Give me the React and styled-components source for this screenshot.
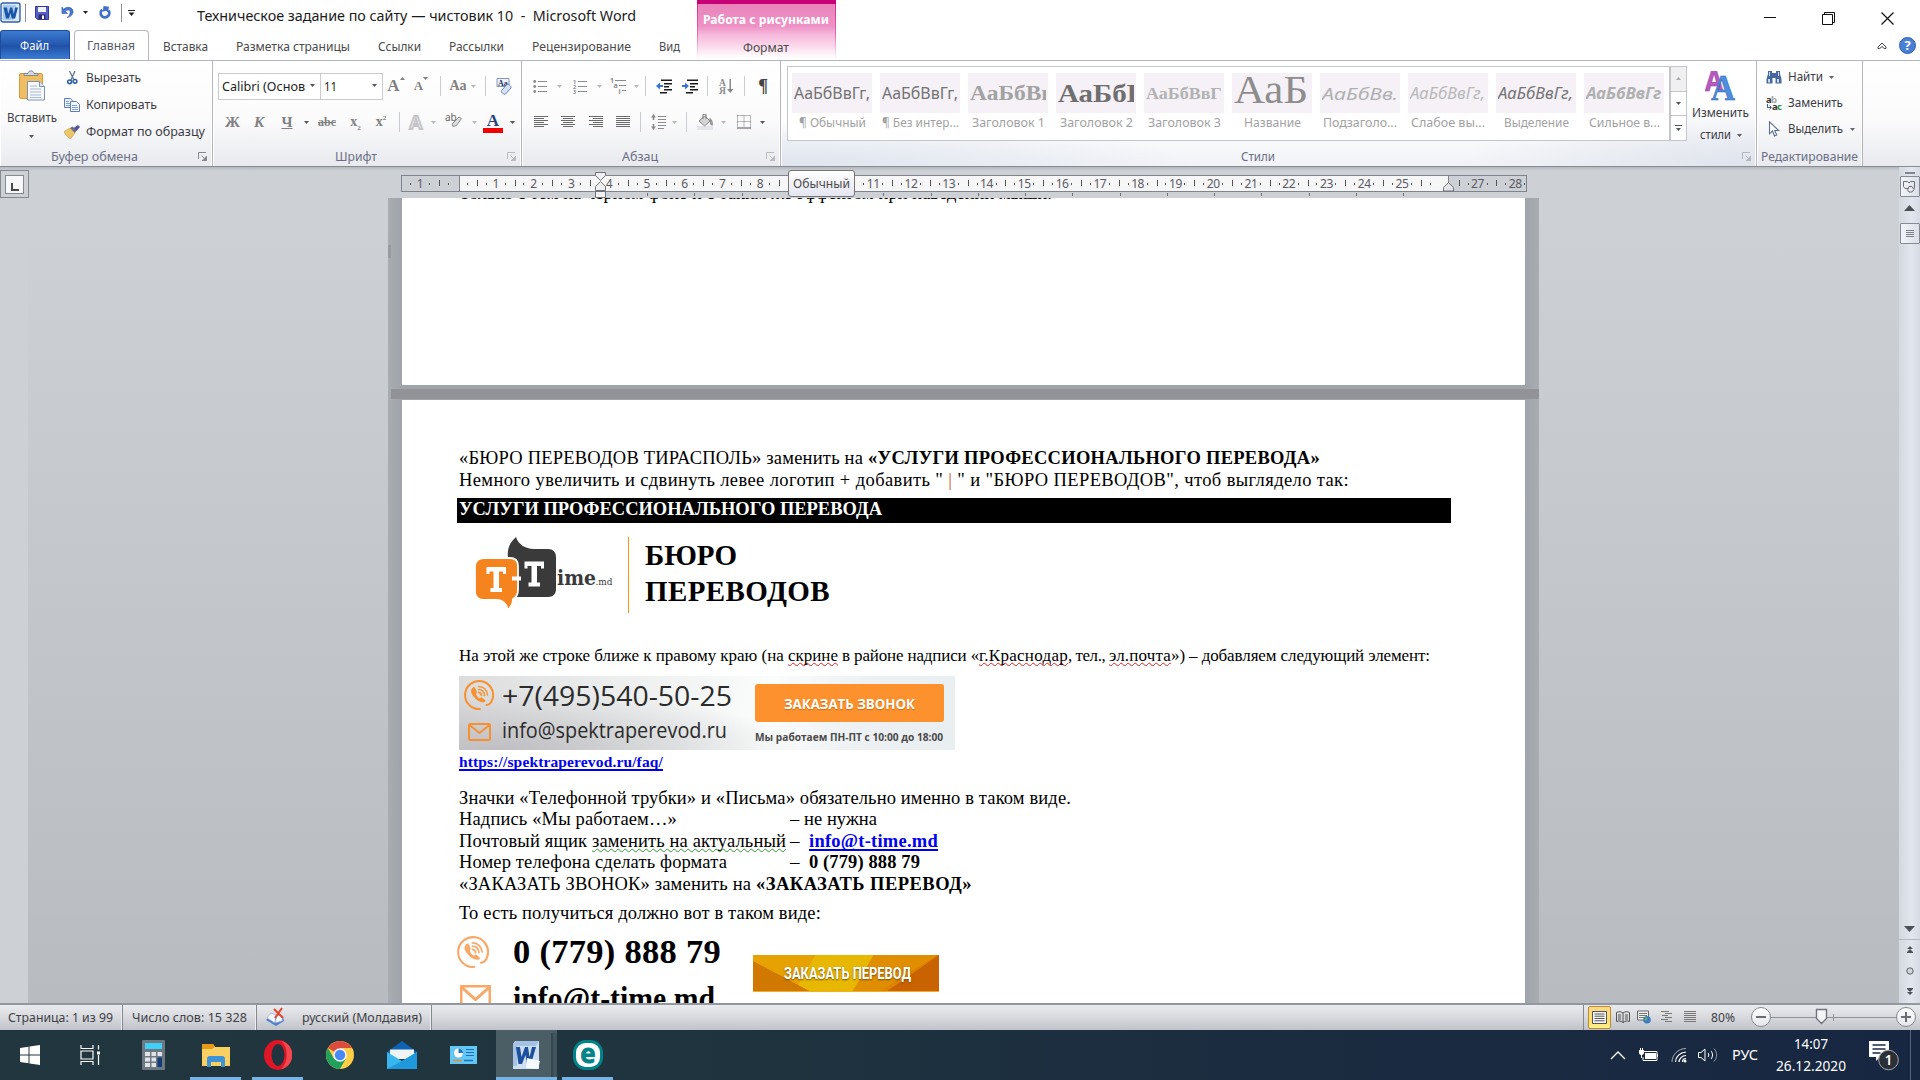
import React, { useLayoutEffect, useRef, useState } from "react";
import styled, { createGlobalStyle, css } from "styled-components";

const UI = `"Noto Sans", "Open Sans", sans-serif`;
const SERIF = `"Liberation Serif", "Times New Roman", serif`;

const Global = createGlobalStyle`
  * { box-sizing: border-box; }
  body { margin: 0; background: #fff; overflow: hidden; }
  svg { display: block; flex: none; }
`;

/* ---------- text run set to a given measure ---------- */
const RunOuter = styled.span`
  display: inline-block;
  width: ${(p) => p.$w}px;
  white-space: pre;
  text-align: left;
`;
const RunInner = styled.span`
  display: inline-block;
  white-space: pre;
  transform-origin: 0 50%;
`;
function Run({ w, spaced, className, children }) {
  const ref = useRef(null);
  const [style, setStyle] = useState(undefined);
  useLayoutEffect(() => {
    const el = ref.current;
    const natural = el.getBoundingClientRect().width;
    if (spaced) setStyle({ letterSpacing: `${(w - natural) / el.textContent.length}px` });
    else setStyle({ transform: `scaleX(${w / natural})` });
  }, [w, spaced]);
  return (
    <RunOuter $w={w} className={className}>
      <RunInner ref={ref} style={style}>{children}</RunInner>
    </RunOuter>
  );
}

/* ---------- window shell ---------- */
const Window = styled.div`
  width: 1920px;
  height: 1080px;
  display: flex;
  flex-direction: column;
  overflow: hidden;
  font-family: ${UI};
  font-size: 12.5px;
  line-height: 16px;
  color: #3c3c3c;
`;
const Header = styled.header`
  height: 60px;
  flex: none;
  display: flex;
  background: #fff;
`;
const HeaderLeft = styled.div`
  width: 697px;
  display: flex;
  flex-direction: column;
`;
const QuickBar = styled.div`
  height: 31px;
  display: flex;
  align-items: center;
  padding-bottom: 5px;
`;
const Cell = styled.div`
  width: ${(p) => p.$w}px;
  flex: none;
  display: flex;
  align-items: center;
  justify-content: center;
`;
const VLine = styled.i`
  width: 1px;
  height: ${(p) => p.$h || 18}px;
  background: ${(p) => p.$c || "#8e9298"};
`;
const Title = styled.div`
  font-size: 14.4px;
  color: #1b1b1b;
  padding: 6px 0 0 57px;
`;
const TabRow = styled.nav`
  height: 30px;
  display: flex;
`;
const FileTab = styled.div`
  width: 70px;
  height: 29px;
  border: 1px solid #1d4c9c;
  border-bottom: 0;
  border-radius: 3px 3px 0 0;
  background: linear-gradient(#3b7ad0, #2559b0 48%, #1f50a6 52%, #3a7cd6);
  color: #fff;
  display: flex;
  align-items: center;
  justify-content: center;
  padding: 2px 1px 0 0;
`;
const ActiveTab = styled.div`
  width: 75px;
  height: 30px;
  margin-left: 4px;
  border: 1px solid #b4b8be;
  border-bottom: 0;
  border-radius: 4px 4px 0 0;
  background: #fff;
  color: #555a66;
  display: flex;
  align-items: center;
  justify-content: center;
  padding: 1px 1px 0 0;
  position: relative;
  z-index: 1;
`;
const Tabs = styled.div`
  display: flex;
  align-items: center;
  gap: 28px;
  margin-left: 14px;
  padding-top: 3px;
  color: #4a4a4a;
`;
const ContextTab = styled.div`
  width: 139px;
  height: 60px;
  border-top: 4px solid #c80076;
  background:
    linear-gradient(#cf2a8d, #e36fb3 55%, #fff) left / 1px 100% no-repeat,
    linear-gradient(#cf2a8d, #e36fb3 55%, #fff) right / 1px 100% no-repeat,
    linear-gradient(#e984bb, #ee92c5 40%, #f6b9dc 55%, #f9cce5 68%, #fff 96%);
  display: flex;
  flex-direction: column;
  align-items: center;
  padding: 8px 1px 0 0;
  gap: 11.5px;
  color: #4a4a4a;
`;
const ContextTitle = styled.b`
  color: #fff;
  height: 16px;
`;
const HeaderRight = styled.div`
  flex: 1;
  display: flex;
  flex-direction: column;
  align-items: flex-end;
`;
const Caption = styled.div`
  display: flex;
  align-items: center;
  gap: 46px;
  padding: 12px 26px 0 0;
`;
const HelpRow = styled.div`
  display: flex;
  align-items: center;
  gap: 12px;
  padding: 12px 4px 0 0;
`;

/* ---------- ribbon ---------- */
const Ribbon = styled.section`
  height: 107px;
  flex: none;
  display: flex;
  border-top: 1px solid #b4b8be;
  border-bottom: 1px solid #888c93;
  background: linear-gradient(#fff, #fbfbfc 55%, #e8eaee);
`;
const Group = styled.div`
  width: ${(p) => p.$w}px;
  flex: none;
  display: flex;
  flex-direction: column;
  border-right: 1px solid #b3b7bd;
  box-shadow: inset -1px 0 #fff, inset 1px 0 #fff;
  ${(p) => p.$lit && css`
    background:
      radial-gradient(ellipse 420px 46px at 0 100%, #dfe4ee, transparent),
      radial-gradient(ellipse 300px 60px at 100% 100%, #dfe3ec, transparent),
      linear-gradient(#fff 55%, #f1f3f7);
  `}
`;
const GroupBody = styled.div`
  height: 84px;
  display: flex;
`;
const GroupFoot = styled.div`
  height: 21px;
  padding-top: 2px;
  display: flex;
  align-items: center;
  justify-content: center;
  color: #6a6f86;
`;
const Label = styled.div`
  flex: 1;
  display: flex;
  justify-content: center;
  padding-right: ${(p) => p.$pr || 0}px;
`;
const Launch = styled.div`
  width: 14px;
  opacity: ${(p) => (p.$dim ? 0.5 : 1)};
`;
const Stack = styled.div`
  display: flex;
  flex-direction: column;
  align-items: ${(p) => p.$align || "flex-start"};
  width: ${(p) => p.$w}px;
  padding-top: ${(p) => p.$pt || 0}px;
  color: #3c3c44;
`;
const Command = styled.div`
  height: ${(p) => p.$h || 27}px;
  display: flex;
  align-items: center;
`;
const Tools = styled.div`
  display: flex;
  flex-direction: column;
  padding: 12px 0 0 ${(p) => p.$pl}px;
  gap: 10px;
`;
const ToolRow = styled.div`
  height: 26px;
  display: flex;
  align-items: center;
`;
const Combo = styled.div`
  width: ${(p) => p.$w}px;
  height: 27px;
  border: 1px solid #c9cbce;
  margin-right: -1px;
  background: #fff;
  display: flex;
  align-items: center;
  justify-content: space-between;
  padding: 0 5px 1px 3px;
  font-size: 13px;
  color: #1e1e1e;
`;
const Glyph = styled.span`
  font-family: ${SERIF};
  font-weight: 700;
  font-style: ${(p) => (p.$it ? "italic" : "normal")};
  text-decoration: ${(p) => p.$deco || "none"};
  font-size: ${(p) => p.$s || 16}px;
  line-height: 18px;
  color: ${(p) => p.$c || "#808080"};
  sub, sup { font-size: 7px; line-height: 0; }
`;
const SizeGlyph = styled.div`
  display: flex;
  align-items: flex-start;
`;
const ColorGlyph = styled.div`
  width: 20px;
  border-bottom: 5px solid #f00000;
  text-align: center;
  line-height: 15px;
  height: 21px;
`;

const Gallery = styled.div`
  width: 883px;
  height: 75px;
  margin: 5px 0 0 6px;
  border: 1px solid #c3c6cb;
  background: #fff;
  display: flex;
  gap: 8px;
  padding: 6px 0 0 4px;
`;
const StyleItem = styled.div`
  width: 80px;
  display: flex;
  flex-direction: column;
  align-items: center;
  gap: 2px;
  color: #a2a2a2;
`;
const Swatch = styled.div`
  width: 80px;
  height: 40px;
  background: #f5f1f7;
  padding: 0 2px;
  display: flex;
  align-items: center;
`;
const Preview = styled.div`
  width: 76px;
  height: ${(p) => (p.$big ? 38 : 34)}px;
  line-height: ${(p) => (p.$big ? 32 : 35)}px;
  overflow: hidden;
  white-space: nowrap;
  font-family: ${(p) => (p.$serif ? SERIF : UI)};
  font-size: ${(p) => p.$s}px;
  font-weight: ${(p) => (p.$b ? 700 : 400)};
  font-style: ${(p) => (p.$it ? "italic" : "normal")};
  color: ${(p) => p.$c};
`;
const GalleryScroll = styled.div`
  width: 17px;
  height: 75px;
  margin-top: 5px;
  display: flex;
  flex-direction: column;
`;
const ScrollKey = styled.div`
  flex: 1;
  border: 1px solid #c3c6cb;
  margin-top: ${(p) => (p.$first ? 0 : -1)}px;
  background: ${(p) => (p.$off ? "#f0f0f0" : "#fff")};
  display: flex;
  align-items: center;
  justify-content: center;
`;

/* ---------- work area ---------- */
const Work = styled.main`
  height: 836px;
  flex: none;
  display: flex;
  background: linear-gradient(#b4b8be 0, #cdd0d5 4px, #cdd0d5 60px, #b8bbc0);
`;
const SideStrip = styled.div`
  width: 28px;
  background: linear-gradient(#b4b8be 0, #cdd0d5 4px);
`;
const Corner = styled.div`
  width: 29px;
  height: 28px;
  margin-top: 3px;
  border: 1px solid #858991;
  display: flex;
  align-items: center;
  justify-content: center;
`;
const CornerInner = styled.div`
  width: 19px;
  height: 19px;
  border: 1px solid #858991;
  background: #f8f8fa;
  padding: 7px 0 0 5px;
  i { display: block; width: 8px; height: 8px; border: solid #4a4a4a; border-width: 0 0 2px 2px; }
`;
const Canvas = styled.div`
  width: 1871px;
  display: flex;
  flex-direction: column;
`;
const RulerZone = styled.div`
  height: 31px;
  padding: 8px 0 0 373px;
  position: relative;
`;
const RulerBar = styled.div`
  width: 1126px;
  height: 17px;
  border: 1px solid #7f848c;
  display: flex;
  overflow: hidden;
  font-size: 12px;
  color: #5a5a64;
  background: linear-gradient(90deg, #cdd0d5 57px, #7f848c 57px 58px, #f6f6f7 58px 1046px, #7f848c 1046px 1047px, #cdd0d5 1047px);
`;
const RulerCell = styled.div`
  width: 37.77px;
  flex: none;
  display: grid;
  grid-template-columns: 1fr 18px 1fr;
  align-items: center;
  text-align: center;
  line-height: 15px;
  background: linear-gradient(#555, #555) 0 4px / 1px 6px no-repeat;
  letter-spacing: -0.4px;
  &:first-child { margin-left: -0.8px; }
`;
const Dot = styled.i`
  width: 1px;
  height: 2px;
  background: #555;
  justify-self: ${(p) => p.$side};
`;
const TabStops = styled.div`
  width: 760px;
  height: 3px;
  margin: 1px 0 0 246px;
  background: repeating-linear-gradient(90deg, #6c7078 0 1px, transparent 1px 47.25px);
`;
const Marker = styled.div`
  position: absolute;
  left: ${(p) => p.$x}px;
  top: ${(p) => p.$y}px;
`;
const Tooltip = styled.div`
  position: absolute;
  left: 760px;
  top: 3px;
  width: 67px;
  height: 27px;
  border: 1px solid #767676;
  border-radius: 3px;
  background: linear-gradient(#fff, #e4e5f0);
  color: #4c4c4c;
  display: flex;
  align-items: center;
  justify-content: center;
  padding-top: 1px;
`;
const Pages = styled.div`
  width: 1151px;
  height: 805px;
  margin-left: 360px;
  padding: 0 14px;
  display: flex;
  flex-direction: column;
  overflow: hidden;
  background:
    linear-gradient(#979ba0, #979ba0) 0 47px / 3px 13px no-repeat,
    linear-gradient(#929397, #929397) 3px 191px / 1148px 10px no-repeat,
    linear-gradient(90deg, #a9adb2, #9fa4aa 14px, #9fa4aa 1137px, #a9adb2);
`;
const Page = styled.article`
  width: 1123px;
  height: ${(p) => p.$h}px;
  flex: none;
  margin-top: ${(p) => p.$mt || 0}px;
  padding: ${(p) => p.$pt || 0}px 0 0 57px;
  background: #fff;
  overflow: hidden;
  font-family: ${SERIF};
  font-size: 18.5px;
  color: #000;
`;
const Line = styled.div`
  height: ${(p) => p.$h || 21.5}px;
  line-height: ${(p) => p.$h || 21.5}px;
  margin-top: ${(p) => p.$mt || 0}px;
  font-size: ${(p) => p.$s || 18.5}px;
  display: flex;
  white-space: pre;
`;
const Wavy = styled.span`
  text-decoration: underline wavy ${(p) => p.$c} 1px;
  text-underline-offset: 1px;
  text-decoration-skip-ink: none;
`;
const Link = styled.span`
  color: #0000f0;
  font-weight: 700;
  text-decoration: underline 2px;
  text-decoration-skip-ink: none;
  text-underline-offset: 2px;
`;
const Accent = styled.span`
  color: #c0562a;
`;
const BlackBar = styled.div`
  width: 994px;
  height: 25px;
  line-height: 22.5px;
  margin: 7px 0 0 -2px;
  padding-left: 2px;
  background: #000;
  color: #fff;
  font-weight: 700;
`;
const LogoRow = styled.div`
  height: 76px;
  margin: 14px 0 0 16px;
  display: flex;
`;
const LogoText = styled.div`
  width: 154px;
  border-right: 1px solid #f7941e;
`;
const Brand = styled.div`
  padding-left: 16px;
  font-size: 29px;
  font-weight: 700;
  line-height: 36.4px;
  display: flex;
  flex-direction: column;
`;
const Banner = styled.div`
  width: 496px;
  height: 74px;
  margin-top: 10px;
  padding: 4px 11px 0 5px;
  display: flex;
  font-family: "Open Sans", "Noto Sans", sans-serif;
  color: #2b2b2b;
  background:
    radial-gradient(ellipse 300px 60px at 8% 100%, #bfbfc3, transparent),
    linear-gradient(100deg, #dcdcdd, #eceeee 30%, #fbfcfc 62%, #edf1f3 80%, #e9eef1);
`;
const BannerIcons = styled.div`
  width: 38px;
  display: flex;
  flex-direction: column;
  gap: 13px;
`;
const BannerLines = styled.div`
  width: 253px;
  font-size: 27px;
  line-height: 32px;
`;
const Mail = styled.div`
  margin-top: 3px;
  font-size: 21.5px;
  line-height: 30px;
`;
const BannerAside = styled.div`
  padding-top: 4px;
  font-size: 11.3px;
  font-weight: 700;
  line-height: 16px;
  color: #4a4a4a;
`;
const CallButton = styled.div`
  width: 189px;
  height: 38px;
  margin-bottom: 7px;
  padding-top: 2px;
  border-radius: 3px;
  background: #fc912d;
  color: #fff;
  font-size: 13.3px;
  text-shadow: 0 1px 1px #c96d14;
  display: flex;
  align-items: center;
  justify-content: center;
`;
const Contacts = styled.div`
  display: grid;
  grid-template-columns: 56px 240px 186px;
  margin: 4px 0 0 -2px;
`;
const ContactIcons = styled.div`
  padding-top: 8px;
  display: flex;
  flex-direction: column;
  gap: 17px;
`;
const ContactLines = styled.div`
  font-size: 34.5px;
  line-height: 47px;
  font-weight: 700;
`;
const OrderButton = styled.div`
  width: 186px;
  height: 37px;
  margin-top: 27px;
  padding: 2px 0 0 3px;
  border-bottom: 1px solid #f0b020;
  background:
    linear-gradient(28deg, #d07800 22%, transparent 22.5%),
    linear-gradient(145deg, transparent 78%, #c96200 78.5%),
    linear-gradient(-32deg, #dc8200 24%, transparent 24.5%),
    linear-gradient(120deg, #e6a200 30%, #e8b800 30.5% 58%, #e08e00 58.5%);
  font: 700 16px/18px Roboto, sans-serif;
  color: #fff;
  text-shadow: 0 1px 2px #7a4a00;
  display: flex;
  align-items: center;
  justify-content: center;
`;

const ScrollCol = styled.aside`
  width: 21px;
  padding-top: 3px;
  display: flex;
  flex-direction: column;
  align-items: center;
  background: linear-gradient(90deg, #d3d8e1, #e2e6ee 60%, #d5dae4);
`;
const SplitGrip = styled.i`
  width: 10px;
  height: 2px;
  margin-top: 2px;
  background: #80858e;
`;
const ScrollKeyBox = styled.div`
  width: 20px;
  height: 21px;
  margin-top: ${(p) => p.$mt}px;
  border: 1px solid #858b95;
  border-radius: 1px;
  background: linear-gradient(90deg, #f2f4f8, #dcdfe8);
  display: flex;
  align-items: center;
  justify-content: center;
`;
const ScrollFoot = styled.div`
  margin-top: auto;
  height: 80px;
  width: 21px;
  display: flex;
  flex-direction: column;
  align-items: center;
  padding-top: 3px;
`;
const FootNav = styled.div`
  width: 21px;
  height: 64px;
  margin-top: 7px;
  padding: 6px 0 8px;
  border-top: 1px solid #b1b6c0;
  display: flex;
  flex-direction: column;
  justify-content: space-between;
  align-items: center;
`;

/* ---------- status bar ---------- */
const Status = styled.footer`
  height: 27px;
  flex: none;
  border-top: 2px solid #9297a1;
  background: linear-gradient(#e9ebee, #d9dbdf 45%, #c0c3c9);
  display: flex;
  align-items: center;
  color: #3f3f46;
  font-size: 13px;
`;
const StatusItem = styled.div`
  width: ${(p) => p.$w}px;
  height: 25px;
  padding: 0 0 2px ${(p) => p.$pl}px;
  display: flex;
  align-items: center;
  gap: ${(p) => p.$gap || 0}px;
  border-right: 1px solid #84888f;
  box-shadow: inset -1px 0 #eceef1;
`;
const StatusRight = styled.div`
  margin-left: auto;
  display: flex;
  align-items: center;
  height: 25px;
  border-left: 1px solid #84888f;
  padding: 0 0 1px 4px;
  width: 337px;
`;
const ViewOn = styled.div`
  width: 23px;
  height: 23px;
  border: 1px solid #c28a2e;
  border-radius: 2px;
  background: linear-gradient(#fbd98a, #fde06b 60%, #fff08c);
  display: flex;
  align-items: center;
  justify-content: center;
`;
const Round = styled.div`
  width: 20px;
  height: 20px;
  border: 1px solid #85898f;
  border-radius: 50%;
  background: linear-gradient(#fff, #e4e6ea);
  display: flex;
  align-items: center;
  justify-content: center;
`;

/* ---------- taskbar ---------- */
const Taskbar = styled.div`
  height: 50px;
  flex: none;
  display: flex;
  justify-content: space-between;
  background: linear-gradient(90deg, #22363f, #1f343e 35%, #1b2c40 65%, #172742);
  color: #fff;
`;
const Apps = styled.div`
  display: flex;
`;
const AppButton = styled.div`
  width: ${(p) => p.$w || 51}px;
  margin-left: ${(p) => p.$ml || 0}px;
  height: 50px;
  display: flex;
  align-items: center;
  justify-content: center;
  border-top: 3px solid transparent;
  border-bottom: 3px solid ${(p) => (p.$run ? "#76b4e6" : "transparent")};
  ${(p) => p.$on && css`
    background: linear-gradient(90deg, #4b5e66 55px, #34464f 55px 57px, #42545c 57px);
    border-top-color: #4b5e66;
    padding-right: 2px;
  `}
`;
const Tray = styled.div`
  width: 310px;
  display: flex;
  align-items: center;
  font-size: 14px;
`;
const Clock = styled.div`
  width: 91px;
  display: flex;
  flex-direction: column;
  align-items: center;
  gap: 6px;
  line-height: 16px;
`;
const Notice = styled.div`
  width: 48px;
  padding-left: 13px;
`;

/* ---------- icons ---------- */
const Caret = ({ c = "#666", up }) => (
  <svg width="5" height="3" viewBox="0 0 5 3"><path d={up ? "M0 3h5L2.500 0z" : "M0 0h5L2.500 3z"} fill={c} /></svg>
);
const Launcher = () => (
  <svg width="9" height="9" viewBox="0 0 9 9" fill="none" stroke="#85898f"><path d="M.5 7V.5H8M3.500 3.500l3 3" /><path d="M8.500 4v4.500H4M5 8l3-3v3z" fill="#85898f" /></svg>
);
const WordSmall = () => (
  <svg width="21" height="21" viewBox="0 0 21 21"><rect x="1" y="1" width="19" height="19" rx="2" fill="#dce9f8" stroke="#2f62ac" strokeWidth="1.400" /><path d="M3 3h13v12l-3 3H3z" fill="#a9c9ee" /><path d="M3.500 5.500h3.500l1.200 6.500 2-6.500h2l1.500 6.500 1.500-6.500H18l-3 11h-3.200l-1.400-5.500L9 16.500H6z" fill="#1a56a8" /></svg>
);
const Save = () => (
  <svg width="14" height="14" viewBox="0 0 14 14"><path d="M.5.5h13v13h-11l-2-2z" fill="#5a5fc4" stroke="#35379a" /><path d="M3 1h8v5H3z" fill="#eef2fb" /><path d="M3.500 8.500h7V13h-7z" fill="#2b2c6e" /><path d="M7 9.500h2V13H7z" fill="#fff" /></svg>
);
const Undo = () => (
  <svg width="13" height="13" viewBox="0 0 14 14"><path d="M1 1v7h6L4.600 5.700C7 3.500 10 4 9.800 7c0 2-1.300 4-3.300 5.500C10 12 13 9.500 13 6c0-5-7-6-10.300-2.400z" fill="#4a78d0" stroke="#2c55ac" strokeWidth=".6" /></svg>
);
const Redo = () => (
  <svg width="12" height="14" viewBox="0 0 12 14"><path d="M3.200 3.800A4.300 4.300 0 1 0 9.500 4.500" fill="none" stroke="#3f70cc" strokeWidth="2.800" /><path d="M4.500 0l5.500.8-1 5.800-2-1.800-3.200 1z" fill="#3f70cc" /></svg>
);
const Paste = () => (
  <svg width="26" height="31" viewBox="0 0 26 31"><rect x=".5" y="3.500" width="23" height="25" rx="1.500" fill="#f0be62" stroke="#d79a3a" /><path d="M5 5.500V3.500h4C9 0 15 0 15 3.500h4v2z" fill="#d5d9df" stroke="#6e747e" strokeWidth=".8" /><path d="M8.500 11.500h12l5 5v13.500h-17z" fill="#f6f9fd" stroke="#7f93b0" /><path d="M20.500 11.500v5h5" fill="#dce6f2" stroke="#7f93b0" /><path d="M11 16h7M11 19h11M11 22h11M11 25h11M11 27.500h11" stroke="#a9b9cf" /></svg>
);
const Scissors = () => (
  <svg width="11" height="14" viewBox="0 0 11 14" fill="none"><path d="M2.500 0l4.500 9M8 0L4 9" stroke="#5f7697" strokeWidth="1.300" /><circle cx="2.600" cy="10.800" r="1.900" stroke="#2a5caa" strokeWidth="1.500" /><circle cx="8" cy="10.300" r="1.900" stroke="#2a5caa" strokeWidth="1.500" /></svg>
);
const Copy = () => (
  <svg width="16" height="14" viewBox="0 0 16 14" stroke="#5b7fb5"><path d="M.5.5h6l2 2v7h-8z" fill="#e9f0fa" /><path d="M6.500 3.500h6l3 3v7h-9z" fill="#f3f7fd" /><path d="M2 3.500h3M2 5.500h4M2 7.500h4M8 7.500h5M8 9.500h6M8 11.500h6" stroke="#7fa1d2" /></svg>
);
const Brush = () => (
  <svg width="16" height="14" viewBox="0 0 16 14"><path d="M0 6.500l6-3.500 5 5-4.500 6C3 12 1 9 0 6.500z" fill="#edc667" stroke="#b78e3b" strokeWidth=".5" /><path d="M6 3l2.500-1.500 4 4-1.500 2.500z" fill="#6d6d84" /><path d="M9.500 3l4.500-3 2 2-3.500 4z" fill="#5053a0" /></svg>
);
const Eraser = () => (
  <svg width="17" height="17" viewBox="0 0 17 17"><path d="M1 .5h12v8H1z" fill="#eef3fb" stroke="#8398bd" /><text x="2" y="7.500" fontSize="8" fontFamily="Liberation Serif" fontWeight="700" fill="#24335c">Aa</text><path d="M5.500 12.500L11 6.500c1-1 5 2 4 3.500l-5.500 6c-1.500 1-5-2-4-3.500z" fill="#d5e2f5" stroke="#6984b4" /></svg>
);
const Bars = ({ rows, w = 15, c = "#6a6a6a" }) => (
  <svg width={w} height={rows.length * 2} viewBox={`0 0 ${w} ${rows.length * 2}`} shapeRendering="crispEdges">
    {rows.map(([x, l], i) => <rect key={i} x={x} y={i * 2} width={l} height="1" fill={c} />)}
  </svg>
);
const ListIcon = ({ num }) => (
  <svg width="15" height="15" viewBox="0 0 15 15" fill="#8b8b8b"><path d="M5 2h9v1H5zM5 7h9v1H5zM5 12h9v1H5z" />{num ? [1, 2, 3].map((n) => <text key={n} x="0" y={n * 5 - 0.500} fontSize="5.500" fontWeight="700" fontFamily="Noto Sans">{n}</text>) : <><circle cx="1.700" cy="2.500" r="1.400" /><circle cx="1.700" cy="7.500" r="1.400" /><circle cx="1.700" cy="12.500" r="1.400" /></>}</svg>
);
const Multi = () => (
  <svg width="17" height="16" viewBox="0 0 17 16" fill="#8b8b8b" fontSize="7" fontWeight="700" fontFamily="Noto Sans"><path d="M5 2h11v1H5zM9 7h7v1H9zM12 12h4v1h-4z" /><text x="0" y="5">1</text><text x="3.500" y="10">a</text><text x="8.500" y="15.500">i</text></svg>
);
const Indent = ({ out }) => (
  <svg width="17" height="15" viewBox="0 0 17 15"><path d="M5 .500h11v1.500H5zM8 4h8v1.500H8zM8 7h5v1.500H8zM8 10h8v1.500H8zM4 13h7v1.500H4z" fill="#1a1a1a" /><path d={out ? "M0 7l4-3.500v2.500h3v2H4v2.500z" : "M7 7L3 3.500v2.500H0v2h3v2.500z"} fill="#3b74cf" /></svg>
);
const Sort = () => (
  <svg width="15" height="17" viewBox="0 0 15 17" fill="#8b8b8b" fontFamily="Liberation Serif" fontWeight="700" fontSize="9.500"><text x="0" y="7.500">А</text><text x="0" y="16">Я</text><path d="M10.500 1h1.500v10h2.500l-3.200 4L8 11h2.500z" /></svg>
);
const Spacing = () => (
  <svg width="16" height="16" viewBox="0 0 16 16" fill="#8b8b8b"><path d="M2.500 0L5 3.500H3.300V6H1.700V3.500H0zM2.500 16L5 12.500H3.300V10H1.700v2.500H0zM7 2h8v1H7zM7 5h8v1H7zM7 8h8v1H7zM7 11h8v1H7zM7 14h6v1H7z" /></svg>
);
const Bucket = () => (
  <svg width="17" height="16" viewBox="0 0 17 16"><rect x="0" y="12" width="16" height="4" fill="#e9e3ea" /><path d="M2 7l6-5 5 5-5.500 5z" fill="#d4d4d4" stroke="#8b8b8b" /><path d="M6 5V1.500c0-2 3-2 3 0V5M13 5c2 1 2.500 3 2 6-2-1-2-3-2-6z" fill="none" stroke="#8b8b8b" strokeWidth="1.300" /></svg>
);
const Borders = () => (
  <svg width="14" height="14" viewBox="0 0 14 14" fill="none" stroke="#777"><path d="M.5.5h13v12M.5.5v12M7 .5v12M.5 6.500h13" strokeDasharray="1 1" /><path d="M0 13h14" stroke="#555" /></svg>
);
const ChangeStyles = () => (
  <svg width="31" height="30" viewBox="0 0 31 30" fontFamily="Liberation Serif" fontWeight="700"><text x="0" y="20" fontSize="28" fill="#b65ac0" stroke="#8d3a9b" strokeWidth=".5" textLength="18" lengthAdjust="spacingAndGlyphs" fontFamily="Open Sans">A</text><text x="6" y="28.500" fontSize="36" fill="#4f8ede" stroke="#2a5fae" strokeWidth=".5" textLength="24" lengthAdjust="spacingAndGlyphs">A</text></svg>
);
const Binoculars = () => (
  <svg width="16" height="14" viewBox="0 0 16 14"><path d="M2 1h4v2h4V1h4v3l1.500 5v4.500h-6V8h-3v5.500h-6V9L2 4z" fill="#44689f" /><path d="M2 9h2v3.500H2zM11 9h2v3.500h-2zM3 2h1v4H3zM12 2h1v4h-1z" fill="#cddcf0" /></svg>
);
const Replace = () => (
  <svg width="16" height="16" viewBox="0 0 16 16" fontFamily="Noto Sans" fontWeight="700" fontSize="9.500"><text x="0" y="7.500" fill="#333">a</text><text x="5" y="7.500" fill="#a5a5a5">b</text><text x="6" y="15" fill="#333">a</text><text x="11" y="15" fill="#2c8a2c">c</text><path d="M1.500 9v3.500H5M3.500 10.500l2 2-2 2" fill="none" stroke="#3b5f9c" /></svg>
);
const Pointer = () => (
  <svg width="12" height="16" viewBox="0 0 12 16"><path d="M1.500.8v12l3-2.800 2 5 2.200-1-2-4.500h4z" fill="#fff" stroke="#5d6f94" strokeWidth="1.100" /></svg>
);
const Handset = ({ size = 30, c = "#f7912f", sw = 2 }) => (
  <svg width={size} height={size} viewBox="0 0 30 30" fill="none" stroke={c} strokeLinecap="round"><path d="M16 29A14 14 0 1 1 28.500 19C27.500 22.500 25 25 22.500 25" strokeWidth={sw} /><path d="M9.300 7.300c-3 2-3 5.200.2 9.200 4 5 8.500 7 11.500 5.200.7-.6.6-1.300 0-1.800l-2.700-2.200c-.7-.5-1.400-.4-2 .3-1.300 1.200-5-3.200-4-4.800.6-.5.8-1.100.4-1.900l-1.700-3.500c-.4-.8-1-1-1.700-.5z" fill={c} stroke="none" /><path d="M14.500 6.500c5 0 8.500 3.500 9 8.500M14.500 9.500c3.500 0 5.700 2.500 6 6M14.500 12.500c1.700.2 2.800 1.500 3 3" strokeWidth="1.600" /></svg>
);
const Envelope = ({ w = 23, h = 18, c = "#f7912f", sw = 2 }) => (
  <svg width={w} height={h} viewBox={`0 0 ${w} ${h}`} fill="none" stroke={c} strokeWidth={sw} strokeLinejoin="round"><rect x="1" y="1" width={w - 2} height={h - 2} rx="1.500" /><path d={`M1.500 2L${w / 2} ${h * 0.560}L${w - 1.500} 2`} /></svg>
);
const TTimeLogo = () => (
  <svg width="140" height="74" viewBox="0 0 140 74">
    <path d="M41 0c-7 6-9 13-8 21l9 5v34h31c5 0 8-3 8-8V20c0-5-3-8-8-8H59C50 12 43 7 41 0z" fill="#3a3a3b" />
    <path d="M9 21h26c5 0 8 3 8 8v24c0 5-3 8-5 9 0 4-2 8-5 11-2-7-6-10-11-10H9c-5 0-9-3-9-8V29c0-5 4-8 9-8z" fill="#f5841f" stroke="#fff" strokeWidth="1.800" />
    <path d="M11.500 30H31v7h-3v-2.500h-4V51h3v4H15.500v-4h3V34.500h-4V37h-3zM49.500 24.500H69v7h-3V29h-4v16.500h3v4H53.500v-4h3V29h-4v2.500h-3z" fill="#fff" />
    <path d="M37 39.500h9v4h-9z" fill="#fff" />
    <g fontFamily="DejaVu Serif, Liberation Serif" fill="#3a3a3b"><text x="82" y="48" fontSize="21" fontWeight="700" textLength="39" lengthAdjust="spacingAndGlyphs">ime</text><text x="120.500" y="48" fontSize="10" textLength="17" lengthAdjust="spacingAndGlyphs">.md</text></g>
  </svg>
);
const Proof = () => (
  <svg width="22" height="20" viewBox="0 0 22 20"><path d="M1 13l5-5 12 2 1 4-8 5z" fill="#4f7fd0" /><path d="M2 11l4-5 5 2-1 8zM10 16l2-8 6 1-1 5z" fill="#f4f7fc" stroke="#8ba3c8" strokeWidth=".6" /><path d="M9 2l9 9M17 1l-7 10" stroke="#e8452c" strokeWidth="2" /></svg>
);
const Book = () => (
  <svg width="14" height="13" viewBox="0 0 14 13" fill="none" stroke="#555"><path d="M.5 1.500C3 .3 5 .5 7 2c2-1.500 4-1.700 6.500-.5v9C11 9.500 9 10 7 11.500 5 10 3 9.500.5 10.500zM7 2v10M2 4h3M2 6h3M2 8h3M9 4h3M9 6h3M9 8h3" /></svg>
);
const Web = () => (
  <svg width="14" height="14" viewBox="0 0 14 14"><path d="M.5 1h11v9H.5z" fill="#f2f2f2" stroke="#666" /><path d="M2 3.500h8M2 5.500h8M2 7.500h6" stroke="#777" /><circle cx="10" cy="9.800" r="3.800" fill="#3c7cc4" /><path d="M8 8c2-2 3 0 2 2l-2 1z" fill="#63b04b" /></svg>
);
const Outline = () => <Bars w={11} c="#777" rows={[[0, 8], [4, 7], [1, 6], [4, 7], [0, 7], [4, 7]]} />;

/* ---------- data ---------- */
const TABS = [["Вставка", 45], ["Разметка страницы", 114], ["Ссылки", 43], ["Рассылки", 55], ["Рецензирование", 99], ["Вид", 21]];
const STYLES = [
  { name: "¶ Обычный", w: 67, text: "АаБбВвГг,", s: 15.5, c: "#737373", run: 76 },
  { name: "¶ Без интер...", w: 77, text: "АаБбВвГг,", s: 15.5, c: "#737373", run: 76 },
  { name: "Заголовок 1", w: 73, text: "АаБбВв", s: 20, c: "#a2a2a2", b: 1, serif: 1, run: 84 },
  { name: "Заголовок 2", w: 73, text: "АаБбВ", s: 26, c: "#6f6f6f", b: 1, serif: 1, run: 88 },
  { name: "Заголовок 3", w: 73, text: "АаБбВвГг", s: 17.5, c: "#b2b2b2", b: 1, serif: 1, run: 84 },
  { name: "Название", w: 57, text: "АаБ", s: 40, c: "#8d8d8d", serif: 1, big: 1, run: 74 },
  { name: "Подзаголо...", w: 74, text: "АаБбВв.", s: 17, c: "#b0b0b0", it: 1, run: 76 },
  { name: "Слабое вы...", w: 74, text: "АаБбВвГг,", s: 15.5, c: "#b8b8b8", it: 1, run: 75 },
  { name: "Выделение", w: 65, text: "АаБбВвГг,", s: 15.5, c: "#737373", it: 1, run: 75 },
  { name: "Сильное в...", w: 71, text: "АаБбВвГг", s: 15.5, c: "#b0b0b0", it: 1, b: 1, run: 75 },
];
const L = [[0, 14], [0, 10], [0, 14], [0, 10], [0, 14], [0, 10]];
const C = [[0, 14], [2, 10], [0, 14], [2, 10], [0, 14], [2, 10]];
const R = [[0, 14], [4, 10], [0, 14], [4, 10], [0, 14], [4, 10]];
const J = [[0, 14], [0, 14], [0, 14], [0, 14], [0, 14], [0, 14]];
const COVERED = [0, 9, 10, 26];
const Sep = ({ w }) => <Cell $w={w}><VLine $h={20} $c="#c9ccd0" /></Cell>;
const Drop = ({ w, dim }) => <Cell $w={w}><Caret c={dim ? "#b8b8b8" : "#555"} /></Cell>;

function TitleArea() {
  return (
    <Header>
      <HeaderLeft>
        <QuickBar>
          <Cell $w={21}><WordSmall /></Cell>
          <Cell $w={9}><VLine /></Cell>
          <Cell $w={24}><Save /></Cell>
          <Cell $w={27}><Undo /></Cell>
          <Cell $w={9}><Caret c="#222" /></Cell>
          <Cell $w={30}><Redo /></Cell>
          <Cell $w={3}><VLine /></Cell>
          <Cell $w={17}><svg width="7" height="6" viewBox="0 0 7 6" fill="#222"><path d="M0 0h7v1H0zM.5 2.500h6L3.500 6z" /></svg></Cell>
          <Title><Run w={439}>Техническое задание по сайту — чистовик 10  -  Microsoft Word</Run></Title>
        </QuickBar>
        <TabRow>
          <FileTab><Run w={29}>Файл</Run></FileTab>
          <ActiveTab><Run w={48}>Главная</Run></ActiveTab>
          <Tabs>{TABS.map(([t, w]) => <Run key={t} w={w}>{t}</Run>)}</Tabs>
        </TabRow>
      </HeaderLeft>
      <ContextTab>
        <ContextTitle><Run w={126}>Работа с рисунками</Run></ContextTitle>
        <Run w={46}>Формат</Run>
      </ContextTab>
      <HeaderRight>
        <Caption>
          <svg width="12" height="13" viewBox="0 0 12 13"><path d="M0 5.500h12" stroke="#111" /></svg>
          <svg width="13" height="13" viewBox="0 0 13 13" fill="none" stroke="#111"><path d="M.5 2.500h10v10H.5zM2.500 2.500v-2h10v10h-2" /></svg>
          <svg width="13" height="13" viewBox="0 0 13 13" stroke="#111" strokeWidth="1.200"><path d="M.5.5l12 12M12.500.5l-12 12" /></svg>
        </Caption>
        <HelpRow>
          <svg width="10" height="8" viewBox="0 0 10 8" fill="none" stroke="#444"><path d="M1 5l4-4 4 4v1.500H7.200L5 4.500 2.800 6.500H1z" /></svg>
          <svg width="17" height="17" viewBox="0 0 17 17"><circle cx="8.500" cy="8.500" r="8" fill="#4a80d4" stroke="#2e62b6" /><text x="8.500" y="13" fontSize="13" fontWeight="700" fill="#fff" textAnchor="middle" fontFamily="Noto Sans">?</text></svg>
        </HelpRow>
      </HeaderRight>
    </Header>
  );
}

function RibbonArea() {
  return (
    <Ribbon>
      <Group $w={213}>
        <GroupBody>
          <Stack $w={63} $pt={9} $align="center">
            <Paste />
            <Command $h={34}><Run w={50}>Вставить</Run></Command>
            <Caret c="#555" />
          </Stack>
          <Cell $w={1} />
          <Stack $w={148} $pt={4}>
            <Command><Cell $w={16}><Scissors /></Cell><Cell $w={6} /><Run w={55}>Вырезать</Run></Command>
            <Command><Cell $w={16}><Copy /></Cell><Cell $w={6} /><Run w={71}>Копировать</Run></Command>
            <Command><Cell $w={16}><Brush /></Cell><Cell $w={6} /><Run w={119}>Формат по образцу</Run></Command>
          </Stack>
        </GroupBody>
        <GroupFoot><Label $pr={10}><Run w={87}>Буфер обмена</Run></Label><Launch><Launcher /></Launch></GroupFoot>
      </Group>

      <Group $w={309}>
        <GroupBody>
          <Tools $pl={5}>
            <ToolRow>
              <Combo $w={103}><Run w={83}>Calibri (Основ</Run><Caret c="#555" /></Combo>
              <Combo $w={63}><Run w={13}>11</Run><Caret c="#555" /></Combo>
              <Cell $w={28}><SizeGlyph><Glyph $s={17}>A</Glyph><Caret up c="#808080" /></SizeGlyph></Cell>
              <Cell $w={22}><SizeGlyph><Glyph $s={13}>A</Glyph><Caret c="#808080" /></SizeGlyph></Cell>
              <Sep w={16} />
              <Cell $w={20}><Glyph $s={14}>Aa</Glyph></Cell>
              <Drop w={10} dim />
              <Sep w={14} />
              <Cell $w={24}><Eraser /></Cell>
            </ToolRow>
            <ToolRow>
              <Cell $w={29}><Glyph $s={15}>Ж</Glyph></Cell>
              <Cell $w={24}><Glyph $s={15} $it>К</Glyph></Cell>
              <Cell $w={32}><Glyph $s={15} $deco="underline">Ч</Glyph></Cell>
              <Drop w={6} />
              <Cell $w={36}><Glyph $s={12} $deco="line-through">abc</Glyph></Cell>
              <Cell $w={21}><Glyph $s={14}>x<sub>2</sub></Glyph></Cell>
              <Cell $w={30}><Glyph $s={14}>x<sup>2</sup></Glyph></Cell>
              <Sep w={7} />
              <Cell $w={26}><svg width="17" height="18" viewBox="0 0 17 18"><text x="1" y="15.500" fontSize="19" fontFamily="Liberation Sans" fontWeight="700" fill="#fff" stroke="#c4c4c8" strokeWidth="1.800">A</text></svg></Cell>
              <Drop w={8} dim />
              <Cell $w={34}><svg width="18" height="18" viewBox="0 0 18 18"><text x="0" y="8" fontSize="10" fontFamily="Noto Sans" fill="#666">ab</text><path d="M7 11l7-7 2.500 1.500-5 7-3.500 1z" fill="#ddd" stroke="#8b8b8b" /></svg></Cell>
              <Drop w={6} dim />
              <Cell $w={32}><ColorGlyph><Glyph $s={17} $c="#27437f">A</Glyph></ColorGlyph></Cell>
              <Drop w={6} />
            </ToolRow>
          </Tools>
        </GroupBody>
        <GroupFoot><Label $pr={8}><Run w={42}>Шрифт</Run></Label><Launch $dim><Launcher /></Launch></GroupFoot>
      </Group>

      <Group $w={259}>
        <GroupBody>
          <Tools $pl={4}>
            <ToolRow>
              <Cell $w={29}><ListIcon /></Cell><Drop w={8} dim />
              <Cell $w={34}><ListIcon num /></Cell><Drop w={5} dim />
              <Cell $w={32}><Multi /></Cell><Drop w={4} dim />
              <Sep w={14} />
              <Cell $w={24}><Indent out /></Cell>
              <Cell $w={28}><Indent /></Cell>
              <Sep w={6} />
              <Cell $w={32}><Sort /></Cell>
              <Sep w={4} />
              <Cell $w={34}><Glyph $s={18} $c="#444">¶</Glyph></Cell>
            </ToolRow>
            <ToolRow>
              <Cell $w={30}><Bars w={14} rows={L} /></Cell>
              <Cell $w={24}><Bars w={14} rows={C} /></Cell>
              <Cell $w={32}><Bars w={14} rows={R} /></Cell>
              <Cell $w={22}><Bars w={14} rows={J} /></Cell>
              <Sep w={13} />
              <Cell $w={24}><Spacing /></Cell><Drop w={6} dim />
              <Sep w={18} />
              <Cell $w={20}><Bucket /></Cell><Drop w={16} dim />
              <Cell $w={26}><Borders /></Cell><Drop w={10} />
            </ToolRow>
          </Tools>
        </GroupBody>
        <GroupFoot><Label $pr={8}><Run w={36}>Абзац</Run></Label><Launch $dim><Launcher /></Launch></GroupFoot>
      </Group>

      <Group $w={976} $lit>
        <GroupBody>
          <Gallery>
            {STYLES.map((s) => (
              <StyleItem key={s.name}>
                <Swatch><Preview $s={s.s} $c={s.c} $b={s.b} $it={s.it} $serif={s.serif} $big={s.big}><Run w={s.run}>{s.text}</Run></Preview></Swatch>
                <Run w={s.w}>{s.name}</Run>
              </StyleItem>
            ))}
          </Gallery>
          <GalleryScroll>
            <ScrollKey $first $off><Caret up c="#aaa" /></ScrollKey>
            <ScrollKey><Caret c="#555" /></ScrollKey>
            <ScrollKey><svg width="7" height="7" viewBox="0 0 7 7" fill="#555"><path d="M0 0h7v1H0zM1 3h5L3.500 6z" /></svg></ScrollKey>
          </GalleryScroll>
          <Stack $w={67} $pt={10} $align="center">
            <ChangeStyles />
            <Command $h={35}><Run w={57}>Изменить</Run></Command>
            <Command $h={0}><Run w={31}>стили</Run><Cell $w={6} /><Caret c="#555" /></Command>
          </Stack>
        </GroupBody>
        <GroupFoot><Label $pr={8}><Run w={34}>Стили</Run></Label><Launch $dim><Launcher /></Launch></GroupFoot>
      </Group>

      <Group $w={106}>
        <GroupBody>
          <Cell $w={9} />
          <Stack $w={96} $pt={3}>
            <Command $h={26}><Cell $w={16}><Binoculars /></Cell><Cell $w={6} /><Run w={35}>Найти</Run><Cell $w={6} /><Caret /></Command>
            <Command $h={26}><Cell $w={16}><Replace /></Cell><Cell $w={6} /><Run w={55}>Заменить</Run></Command>
            <Command $h={26}><Cell $w={16}><Pointer /></Cell><Cell $w={6} /><Run w={55}>Выделить</Run><Cell $w={7} /><Caret /></Command>
          </Stack>
        </GroupBody>
        <GroupFoot><Run w={97}>Редактирование</Run></GroupFoot>
      </Group>
    </Ribbon>
  );
}

function Ruler() {
  return (
    <RulerZone>
      <RulerBar>
        {Array.from({ length: 30 }, (_, i) => i - 1).map((n) => (
          <RulerCell key={n}><Dot $side="end" /><span>{COVERED.includes(n) ? "" : Math.abs(n)}</span><Dot $side="start" /></RulerCell>
        ))}
      </RulerBar>
      <TabStops />
      <Marker $x={567} $y={5}>
        <svg width="11" height="27" viewBox="0 0 11 27" fill="#f0f0f2" stroke="#6f7379"><path d="M.5.5h10v3l-5 5-5-5zM5.500 9.500l5 5v4H.5v-4zM.5 19.500h10v6H.5z" /></svg>
      </Marker>
      <Marker $x={1415} $y={15}>
        <svg width="11" height="10" viewBox="0 0 11 10" fill="#e3e4e7" stroke="#6f7379"><path d="M5.500.5l5 5v3.500H.5V5.500z" /></svg>
      </Marker>
      <Tooltip><Run w={57}>Обычный</Run></Tooltip>
    </RulerZone>
  );
}

function Document() {
  return (
    <Pages>
      <Page $h={187}>
        <Line $mt={-15.5}><Run spaced w={593}>Только с тем на чёрном фоне и с таким же эффектом при наведении мыши.</Run></Line>
      </Page>
      <Page $h={603} $mt={15} $pt={48}>
        <Line><Run spaced w={409}>«БЮРО ПЕРЕВОДОВ ТИРАСПОЛЬ» заменить на </Run><b><Run spaced w={452}>«УСЛУГИ ПРОФЕССИОНАЛЬНОГО ПЕРЕВОДА»</Run></b></Line>
        <Line><Run spaced w={890}>Немного увеличить и сдвинуть левее логотип + добавить " <Accent>|</Accent> " и "БЮРО ПЕРЕВОДОВ", чтоб выглядело так:</Run></Line>
        <BlackBar><Run spaced w={423}>УСЛУГИ ПРОФЕССИОНАЛЬНОГО ПЕРЕВОДА</Run></BlackBar>
        <LogoRow>
          <LogoText><TTimeLogo /></LogoText>
          <Brand><Run spaced w={92}>БЮРО</Run><Run spaced w={185}>ПЕРЕВОДОВ</Run></Brand>
        </LogoRow>
        <Line $s={17} $h={21} $mt={31.5}>
          <Run spaced w={329}>На этой же строке ближе к правому краю (на </Run>
          <Run spaced w={50}><Wavy $c="#e02020">скрине</Wavy></Run>
          <Run spaced w={141}> в районе надписи «</Run>
          <Run spaced w={89}><Wavy $c="#e02020">г.Краснодар</Wavy></Run>
          <Run spaced w={41}>, тел., </Run>
          <Run spaced w={62}><Wavy $c="#e02020">эл.почта</Wavy></Run>
          <Run spaced w={259}>») – добавляем следующий элемент:</Run>
        </Line>
        <Banner>
          <BannerIcons><Handset /><Cell $w={31}><Envelope /></Cell></BannerIcons>
          <BannerLines>
            <Run w={230}>+7(495)540-50-25</Run>
            <Mail><Run w={225}>info@spektraperevod.ru</Run></Mail>
          </BannerLines>
          <BannerAside>
            <CallButton><Run w={131}>ЗАКАЗАТЬ ЗВОНОК</Run></CallButton>
            <Run w={188}>Мы работаем ПН-ПТ с 10:00 до 18:00</Run>
          </BannerAside>
        </Banner>
        <Line $s={15.5} $h={20} $mt={2}><Run spaced w={204}><Link>https://spektraperevod.ru/faq/</Link></Run></Line>
        <Line $mt={16}><Run spaced w={612}>Значки «Телефонной трубки» и «Письма» обязательно именно в таком виде.</Run></Line>
        <Line><Run spaced w={218}>Надпись «Мы работаем…»</Run><Cell $w={113} /><Run spaced w={87}>– не нужна</Run></Line>
        <Line>
          <Run spaced w={133}>Почтовый ящик </Run><Run spaced w={194}><Wavy $c="#2f9a2f">заменить на актуальный</Wavy></Run>
          <Cell $w={4} /><Run w={19}>–  </Run><Run spaced w={129}><Link>info@t-time.md</Link></Run>
        </Line>
        <Line><Run spaced w={268}>Номер телефона сделать формата</Run><Cell $w={63} /><Run w={19}>–  </Run><b><Run spaced w={111}>0 (779) 888 79</Run></b></Line>
        <Line><Run spaced w={297}>«ЗАКАЗАТЬ ЗВОНОК» заменить на </Run><b><Run spaced w={216}>«ЗАКАЗАТЬ ПЕРЕВОД»</Run></b></Line>
        <Line $mt={7.5}><Run spaced w={362}>То есть получиться должно вот в таком виде:</Run></Line>
        <Contacts>
          <ContactIcons><Handset size={32} c="#f9a868" /><Cell $w={37}><Envelope w={31} h={26} c="#f9a868" sw={3} /></Cell></ContactIcons>
          <ContactLines><Run spaced w={208}>0 (779) 888 79</Run><Run w={202}>info@t-time.md</Run></ContactLines>
          <OrderButton><Run w={127}>ЗАКАЗАТЬ ПЕРЕВОД</Run></OrderButton>
        </Contacts>
      </Page>
    </Pages>
  );
}

function WorkArea() {
  return (
    <Work>
      <SideStrip><Corner><CornerInner><i /></CornerInner></Corner></SideStrip>
      <Canvas><Ruler /><Document /></Canvas>
      <ScrollCol>
        <SplitGrip />
        <ScrollKeyBox $mt={2}><svg width="13" height="12" viewBox="0 0 13 12" fill="none" stroke="#6c6c74"><path d="M.5.5h4l1.500 1.500 1.500-1.500h4v7M.5.5v5l1.500 2h3M6 5.500h3l2 3-2 2.500H6L4.500 9z" /></svg></ScrollKeyBox>
        <Cell $w={21}><svg width="11" height="26" viewBox="0 0 11 26"><path d="M0 14h11L5.500 8z" fill="#4c5057" /></svg></Cell>
        <ScrollKeyBox $mt={0}><svg width="8" height="8" viewBox="0 0 8 8" stroke="#7c828c"><path d="M0 .5h8M0 2.500h8M0 4.500h8M0 6.500h8" /></svg></ScrollKeyBox>
        <ScrollFoot>
          <svg width="11" height="6" viewBox="0 0 11 6"><path d="M0 0h11L5.500 6z" fill="#4c5057" /></svg>
          <FootNav>
            <svg width="6" height="7" viewBox="0 0 6 7" fill="#4c5057"><path d="M0 3h6L3 0zM0 6h6L3 3zM0 6h6v1H0z" /></svg>
            <svg width="8" height="8" viewBox="0 0 8 8"><circle cx="4" cy="4" r="3.200" fill="#d0d3d8" stroke="#5c6067" /></svg>
            <svg width="6" height="7" viewBox="0 0 6 7" fill="#4c5057"><path d="M0 0h6v1H0zM0 1h6L3 4zM0 4h6L3 7z" /></svg>
          </FootNav>
        </ScrollFoot>
      </ScrollCol>
    </Work>
  );
}

function StatusBar() {
  return (
    <Status>
      <StatusItem $w={123} $pl={8}><Run w={105}>Страница: 1 из 99</Run></StatusItem>
      <StatusItem $w={134} $pl={9}><Run w={115}>Число слов: 15 328</Run></StatusItem>
      <StatusItem $w={175} $pl={8} $gap={15}><Proof /><Run w={120}>русский (Молдавия)</Run></StatusItem>
      <StatusRight>
        <ViewOn><svg width="15" height="13" viewBox="0 0 15 13"><path d="M.5.5h14v12H.5z" fill="#f8f8f8" stroke="#555" /><path d="M2.500 3h10M2.500 5.200h10M2.500 7.500h10M2.500 9.800h10" stroke="#555" /></svg></ViewOn>
        <Cell $w={23}><Book /></Cell>
        <Cell $w={20}><Web /></Cell>
        <Cell $w={25}><Outline /></Cell>
        <Cell $w={22}><Bars w={12} c="#777" rows={[[0, 12], [0, 12], [0, 12], [0, 12], [0, 12], [0, 12]]} /></Cell>
        <Cell $w={10} />
        <Run w={24}>80%</Run>
        <Cell $w={16} />
        <Round><svg width="10" height="2"><path d="M0 0h10v2H0z" fill="#6a6e74" /></svg></Round>
        <svg width="125" height="18" viewBox="0 0 125 18"><path d="M0 9.500h125" stroke="#8d929a" /><path d="M62.500 6v7" stroke="#8d929a" /><path d="M45.500 1.500h10v9l-5 5-5-5z" fill="#f4f5f7" stroke="#70757d" strokeWidth="1.400" /></svg>
        <Round><svg width="10" height="10"><path d="M0 4h10v2H0zM4 0h2v10H4z" fill="#6a6e74" /></svg></Round>
      </StatusRight>
    </Status>
  );
}

function TaskbarArea() {
  return (
    <Taskbar>
      <Apps>
        <AppButton $w={60}><svg width="20" height="20" viewBox="0 0 20 20" fill="#fff"><path d="M0 3l8.500-1.200V9.500H0zM9.500 1.600L20 0v9.500H9.500zM0 10.500h8.500v7.700L0 17zM9.500 10.500H20V20L9.500 18.400z" /></svg></AppButton>
        <AppButton $w={60}><svg width="21" height="20" viewBox="0 0 21 20" fill="none" stroke="#fff" strokeWidth="1.200"><path d="M1 0v3.500h12V0M1 20v-3.500h12V20M1 6h12v8H1zM18.500 0v4.500M18.500 10v10" /><path d="M17 6.500h3v3h-3z" fill="#fff" stroke="none" /></svg></AppButton>
        <AppButton $w={66}><svg width="23" height="30" viewBox="0 0 23 30"><rect width="23" height="30" rx="1" fill="#6d7882" /><path d="M3 3h17v6H3z" fill="#3fd0f5" /><path d="M3 12h5v4H3zM9.500 12h4.500v4H9.500zM15.500 12H20v4h-4.500zM3 17.500h5v4H3zM9.500 17.500h4.500v4H9.500zM3 23h5v4H3zM9.500 23h4.500v4H9.500z" fill="#e1e4e7" /><path d="M15.500 17.500H20V27h-4.500z" fill="#123c78" /></svg></AppButton>
        <AppButton $run $ml={4}><svg width="28" height="24" viewBox="0 0 28 24"><path d="M0 1h11l2 3h15v19H0z" fill="#fbd063" /><path d="M0 1h11l2 3-3 2H0z" fill="#e59b18" /><path d="M5 24V16c0-2 1-3 3-3h12c2 0 3 1 3 3v8h-4v-5H9v5z" fill="#3d93d6" /></svg></AppButton>
        <AppButton $run $ml={11}><svg width="28" height="30" viewBox="0 0 28 30"><ellipse cx="14" cy="15" rx="14" ry="15" fill="#e01526" /><path d="M17 1c16 3 14 26 0 28 7-5 8-22 0-28z" fill="#f0484c" /><ellipse cx="14" cy="15" rx="6.500" ry="11" fill="#1f343e" /></svg></AppButton>
        <AppButton $ml={11}><svg width="28" height="28" viewBox="0 0 28 28"><circle cx="14" cy="14" r="14" fill="#ffce44" /><path d="M14 14L1.900 7A14 14 0 0 1 26.100 7H14z" fill="#dd4b3e" /><path d="M1.900 7A14 14 0 0 0 14 28l6-10.500L14 14 7.900 17.500z" fill="#1fa15d" /><circle cx="14" cy="14" r="6.800" fill="#f3f3f3" /><circle cx="14" cy="14" r="5.200" fill="#4889f4" /></svg></AppButton>
        <AppButton $ml={11}><svg width="30" height="28" viewBox="0 0 30 28"><path d="M0 11L15 0l15 11v4H0z" fill="#0f63b4" /><path d="M3 8.500h24V18H3z" fill="#f1f4f7" /><path d="M0 11l15 9 15-9v17H0z" fill="#38b6ee" /><path d="M15 20L0 28h30V11z" fill="#1f98dc" /></svg></AppButton>
        <AppButton $ml={11}><svg width="27" height="18" viewBox="0 0 27 18"><rect width="27" height="18" fill="#63c7f5" /><circle cx="8.500" cy="7" r="4.500" fill="#fff" /><path d="M8.500 7V2.500A4.500 4.500 0 0 1 13 7z" fill="#2077c4" /><path d="M16 3.500h8M16 6.500h8M16 9.500h8" stroke="#1f6fb8" /><path d="M3 14.500h9" stroke="#f08a24" strokeWidth="1.500" /><path d="M14 14.500h9" stroke="#1f6fb8" strokeWidth="1.500" /></svg></AppButton>
        <AppButton $run $on $w={61} $ml={7}><svg width="28" height="29" viewBox="0 0 28 29"><path d="M3 0h24v28H1V3z" fill="#cfdff2" /><path d="M1 3l3-3h23l-3 5H5v20H1z" fill="#a4c1e6" /><path d="M4 6h4l1.500 10L13 6h3l1.500 10L20 6h4l-5 17h-4l-1.500-9-3.500 9H6.500z" fill="#1c4f9e" /><path d="M15 17l13 3-2 8-12-1z" fill="#f6f9fd" /></svg></AppButton>
        <AppButton $run $ml={5}><svg width="30" height="30" viewBox="0 0 30 30"><rect x="1.500" y="1.500" width="27" height="27" rx="11" fill="#fff" stroke="#008489" strokeWidth="3" /><text x="15" y="23" fontSize="26" fontWeight="700" fill="#008489" stroke="#008489" strokeWidth=".8" textAnchor="middle" fontFamily="Open Sans">e</text></svg></AppButton>
      </Apps>
      <Tray>
        <svg width="16" height="9" viewBox="0 0 16 9" fill="none" stroke="#fff" strokeWidth="1.300"><path d="M1 8l7-7 7 7" /></svg>
        <Cell $w={13} />
        <svg width="19" height="14" viewBox="0 0 19 14"><path d="M3 3.500h15v9H4V9" fill="none" stroke="#fff" /><path d="M6 5h11v6H6z" fill="#fff" /><path d="M0 2h5v3.500L3.500 7h-2L0 5.500zM1 0h1v2H1zM3 0h1v2H3zM2 7h1v3H2zM18 6h1v3h-1z" fill="#fff" /></svg>
        <Cell $w={13} />
        <svg width="16" height="16" viewBox="0 0 16 16" fill="none" stroke="#fff"><path d="M4.500 15c0-5 4-9.500 10.500-10M8 15c0-3 3-6.500 7-6.500M11.500 15c0-2 1.500-3.500 3.500-3.500" strokeWidth="1.200" /><path d="M1 15C1 8 7 1.500 15 1.500" opacity=".6" /><circle cx="14" cy="14" r="1.500" fill="#fff" stroke="none" /></svg>
        <Cell $w={11} />
        <svg width="20" height="16" viewBox="0 0 20 16" fill="none" stroke="#fff"><path d="M.5 5.500H3L7 2v12L3 10.500H.5z" /><path d="M10 6c1 1 1 3 0 4M13 4c2 2.300 2 5.700 0 8" /><path d="M16 1.500c3.500 4 3.500 9 0 13" opacity=".5" /></svg>
        <Cell $w={14} />
        <Run w={26}>РУС</Run>
        <Cell $w={7} />
        <Clock><Run w={34}>14:07</Run><Run w={70}>26.12.2020</Run></Clock>
        <Notice>
          <svg width="32" height="32" viewBox="0 0 32 32"><path d="M0 2h20v16h-9l-4 4v-4H0z" fill="#fff" /><path d="M3.500 6h13M3.500 10h13M3.500 14h8" stroke="#1b2b42" strokeWidth="1.400" /><circle cx="19.500" cy="21" r="9.800" fill="#2b2f36" stroke="#a3a7ad" /><text x="19.500" y="26" fontSize="14" fontWeight="600" textAnchor="middle" fill="#fff" fontFamily="Noto Sans">1</text></svg>
        </Notice>
        <Cell $w={12}><VLine $h={50} $c="#596577" /></Cell>
      </Tray>
    </Taskbar>
  );
}

export default function App() {
  return (
    <>
      <Global />
      <Window>
        <TitleArea />
        <RibbonArea />
        <WorkArea />
        <StatusBar />
        <TaskbarArea />
      </Window>
    </>
  );
}
